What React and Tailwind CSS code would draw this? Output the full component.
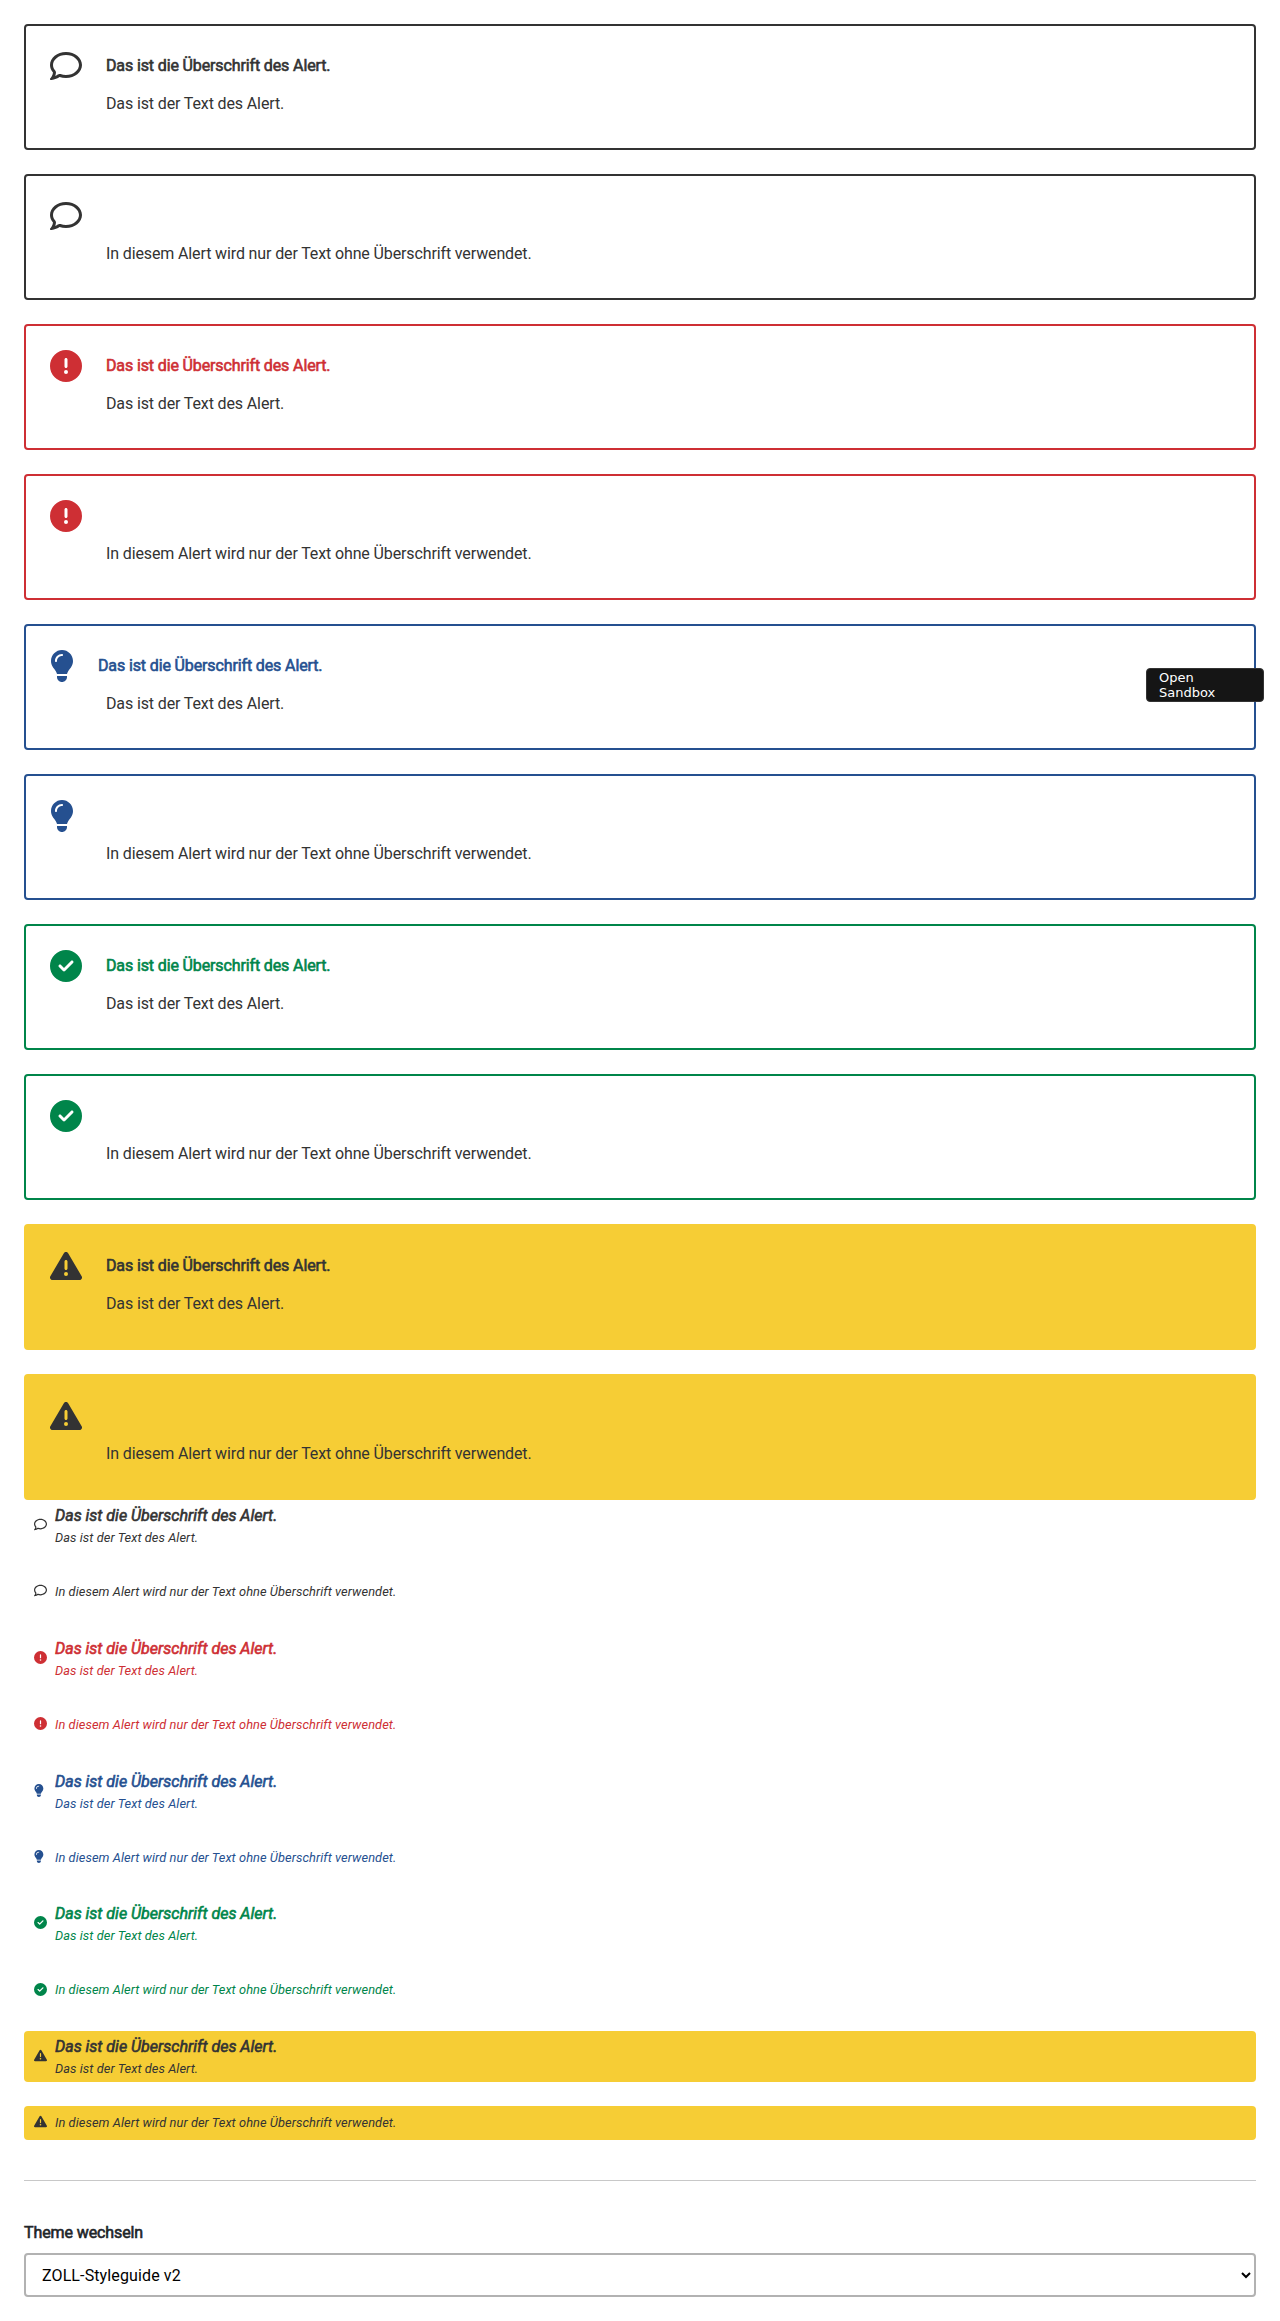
import React from 'react';
import {
  FaRegComment,
  FaCircleExclamation,
  FaLightbulb,
  FaCircleCheck,
  FaTriangleExclamation,
} from 'react-icons/fa6';

const HEADING = 'Das ist die Überschrift des Alert.';
const TEXT = 'Das ist der Text des Alert.';
const TEXT_ONLY = 'In diesem Alert wird nur der Text ohne Überschrift verwendet.';

const VARIANTS = [
  { id: 'standard', Icon: FaRegComment, color: 'text-[#333333]', box: 'border-[#333333]', bg: '', iconW: 'w-8', small: 'w-[13px]' },
  { id: 'error', Icon: FaCircleExclamation, color: 'text-[#ce2f34]', box: 'border-[#ce2f34]', bg: '', iconW: 'w-8', small: 'w-[13px]' },
  { id: 'info', Icon: FaLightbulb, color: 'text-[#255090]', box: 'border-[#255090]', bg: '', iconW: 'w-6', small: 'w-[9.75px]' },
  { id: 'success', Icon: FaCircleCheck, color: 'text-[#00854a]', box: 'border-[#00854a]', bg: '', iconW: 'w-8', small: 'w-[13px]' },
  { id: 'warning', Icon: FaTriangleExclamation, color: 'text-[#333333]', box: 'border-[#f6cd35] bg-[#f6cd35]', bg: 'bg-[#f6cd35]', iconW: 'w-8', small: 'w-[13px]' },
];

function Alert({ variant, heading, text }) {
  const { Icon, color, box, iconW } = variant;
  return (
    <div className={`h-[126px] rounded border-2 p-6 tracking-[-0.128px] ${box}`}>
      <div className={`flex h-8 items-center gap-6 ${color}`}>
        <Icon className={`h-8 shrink-0 ${iconW}`} />
        {heading && <strong className="font-normal leading-6 [-webkit-text-stroke:0.6px_currentColor]">{heading}</strong>}
      </div>
      <p className="mt-[10px] pl-14 leading-6 text-[#333333]">{text}</p>
    </div>
  );
}

function InlineAlert({ variant, heading, text }) {
  const { Icon, color, bg, small } = variant;
  return (
    <div className={`flex items-center rounded px-[10px] italic ${heading ? 'h-[50.75px] pt-[0.48px]' : 'h-[34px]'} ${color} ${bg}`}>
      <span className="mr-2 flex w-[13px] shrink-0 -translate-y-px">
        <Icon className={`h-[13px] ${small}`} />
      </span>
      <div>
        {heading && <strong className="block font-normal leading-6 [-webkit-text-stroke:0.6px_currentColor]">{heading}</strong>}
        <p className="text-[12.8px] leading-[19.2px] tracking-[0.075px]">{text}</p>
      </div>
    </div>
  );
}

export default function App() {
  return (
    <div className="h-[2321px] bg-white px-6 pt-6 font-['Roboto',sans-serif] text-base text-[#212529]">
      <div className="flex flex-col gap-6">
        {VARIANTS.map((v) => (
          <React.Fragment key={v.id}>
            <Alert variant={v} heading={HEADING} text={TEXT} />
            <Alert variant={v} text={TEXT_ONLY} />
          </React.Fragment>
        ))}
      </div>
      <div className="flex flex-col gap-6">
        {VARIANTS.map((v) => (
          <React.Fragment key={v.id}>
            <InlineAlert variant={v} heading={HEADING} text={TEXT} />
            <InlineAlert variant={v} text={TEXT_ONLY} />
          </React.Fragment>
        ))}
      </div>
      <hr className="mt-[40.25px] border-[#c8c8c8]" />
      <label htmlFor="theme" className="mt-10 block leading-6 tracking-[-0.1px] [-webkit-text-stroke:0.6px_currentColor]">
        Theme wechseln
      </label>
      <select
        id="theme"
        className="mt-2 block h-11 w-full rounded border-2 border-[#b2b2b2] bg-white pl-3 tracking-[0.12px] text-black"
      >
        <option>ZOLL-Styleguide v2</option>
      </select>
      <button
        type="button"
        className="absolute left-[1146px] top-[668px] w-[118px] rounded border border-[#333333] bg-[#151515] py-px pl-3 pr-10 text-left font-['DejaVu_Sans',sans-serif] text-[13px] leading-[15px] text-white"
      >
        Open Sandbox
      </button>
    </div>
  );
}
